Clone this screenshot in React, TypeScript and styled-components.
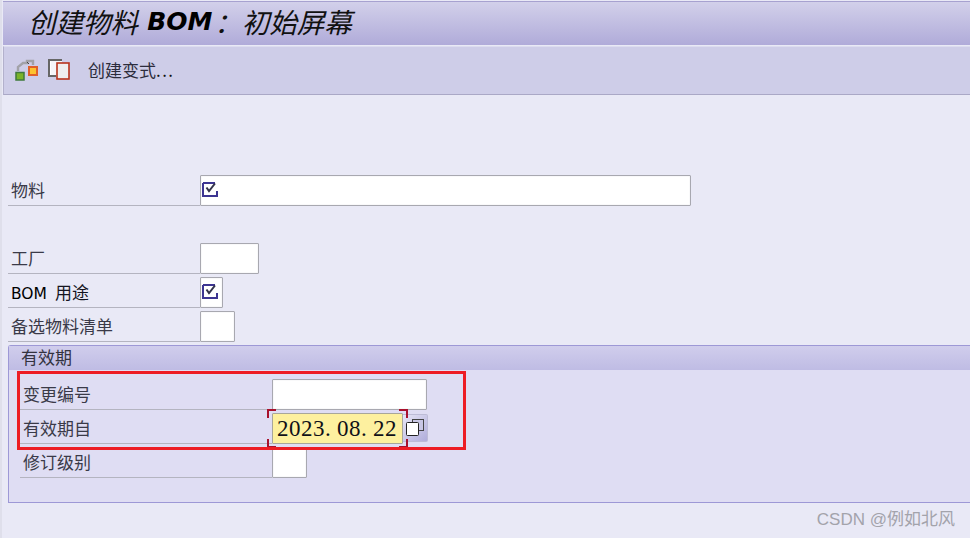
import styled, { createGlobalStyle } from "styled-components";

const CJK = `"Noto Sans CJK SC", "Liberation Sans", sans-serif`;

const GlobalStyle = createGlobalStyle`
  html, body {
    margin: 0;
    padding: 0;
    background: #e9e9f6;
  }
  body {
    font-family: ${CJK};
    overflow: hidden;
  }
`;

const Page = styled.div`
  position: relative;
  width: 970px;
  height: 538px;
  box-sizing: border-box;
  padding: 1px 0 0 3px;
  background: linear-gradient(to right, #dfdfeb 0, #dfdfeb 2px, #e9e9f6 2px);
  overflow: hidden;
`;

const TitleBar = styled.div`
  height: 44px;
  box-sizing: border-box;
  padding: 0 0 5px 25px;
  display: flex;
  align-items: center;
  background: linear-gradient(to bottom, #d2d0ea, #b0abd9);
  border-top: 1px solid #a7a2d0;
  font-size: 27.5px;
  font-style: italic;
  color: #111;
  white-space: pre;
`;

const TitleLatin = styled.span`
  margin: 0 2px 0 3px;
  font-family: "DejaVu Sans", "Liberation Sans", sans-serif;
  font-weight: 700;
  font-size: 25px;
  color: #000;
`;

const Toolbar = styled.div`
  height: 49px;
  margin-top: 1px;
  box-sizing: border-box;
  padding: 0 0 3px 11px;
  display: flex;
  align-items: center;
  background: #cecde8;
  border-top: 1px solid #dcdcef;
  border-left: 1px solid #b3b1cc;
  border-bottom: 1px solid #aaa8c6;
`;

const IconGroup = styled.div`
  display: flex;
  align-items: center;
  gap: 10px;
`;

const ToolbarText = styled.span`
  margin-left: 18px;
  font-size: 17px;
  color: #2c2c3c;
`;

const ToolbarDots = styled.span`
  letter-spacing: 1.4px;
  color: #111;
`;

const Form = styled.div`
  display: flex;
  flex-direction: column;
  padding: 80px 0 0 5px;
`;

const Row = styled.div<{ $gapAfter?: number; $labelWidth: number }>`
  display: flex;
  height: 31px;
  margin-bottom: ${(p) => p.$gapAfter ?? 3}px;
  --label-width: ${(p) => p.$labelWidth}px;
`;

const Label = styled.div<{ $dark?: boolean }>`
  width: var(--label-width);
  box-sizing: border-box;
  padding: 0 0 2px 3px;
  display: flex;
  align-items: center;
  font-size: 17px;
  color: ${(p) => (p.$dark ? "#15151f" : "#3a3a48")};
  border-bottom: 1px solid #b4b4c0;
`;

const LatinLabel = styled.span`
  font-family: "DejaVu Sans", "Liberation Sans", sans-serif;
  color: #000;
  font-size: 15.5px;
  margin-right: 8px;
`;

const Field = styled.div<{ $width: number }>`
  width: ${(p) => p.$width}px;
  box-sizing: border-box;
  padding: 6px 0 0 1px;
  background: #fff;
  border: 1px solid #a8a8b0;
  border-radius: 1px;
  box-shadow: inset 0 0 1px #c4c4cc;
`;

const Group = styled.div`
  height: 158px;
  box-sizing: border-box;
  background: #dfddf3;
  border: 1px solid #9d98d6;
  border-right: 0;
  border-radius: 3px 0 0 0;
`;

const GroupHeader = styled.div`
  height: 24px;
  box-sizing: border-box;
  padding: 0 0 3px 12px;
  display: flex;
  align-items: center;
  background: linear-gradient(to bottom, #d0cdec, #bfbce4);
  font-size: 17px;
  color: #33333f;
`;

const GroupBody = styled.div`
  display: flex;
  flex-direction: column;
  padding: 9px 0 0 11px;
`;

const DateWrap = styled.div`
  position: relative;
  display: flex;
`;

const DateField = styled.div`
  width: 131px;
  box-sizing: border-box;
  padding-left: 4px;
  display: flex;
  align-items: center;
  background: #fdf09f;
  border: 1px solid #a8a69a;
  border-radius: 1px;
  font-family: "Liberation Serif", "DejaVu Serif", serif;
  font-size: 23px;
  letter-spacing: 0.5px;
  color: #101018;
  white-space: nowrap;
`;

const DateDot = styled.span`
  display: inline-block;
  width: 12px;
`;

const Corner = styled.i<{ $side: "left" | "right"; $edge: "top" | "bottom" }>`
  position: absolute;
  width: 7px;
  height: 7px;
  ${(p) => p.$side}: -5px;
  ${(p) => p.$edge}: -4px;
  border-${(p) => p.$side}: 2px solid #a8112c;
  border-${(p) => p.$edge}: 2px solid #a8112c;
`;

const PickerButton = styled.div`
  width: 25px;
  height: 28px;
  margin-top: 1px;
  box-sizing: border-box;
  padding-bottom: 2px;
  display: flex;
  align-items: center;
  justify-content: center;
  background: linear-gradient(135deg, #e6e5f5, #b0addb);
  border: 1px solid #bdbcd6;
  border-left: 0;
  border-radius: 0 2px 2px 0;
`;

const Highlight = styled.div`
  position: absolute;
  left: 17px;
  top: 371px;
  width: 449px;
  height: 79px;
  box-sizing: border-box;
  border: 3px solid #ed1c24;
  pointer-events: none;
`;

const Watermark = styled.div`
  position: absolute;
  right: 15px;
  top: 510px;
  font-family: "Liberation Sans", ${CJK};
  font-size: 17px;
  line-height: 20px;
  color: #a3a3ab;
  white-space: nowrap;
`;

const RequiredMark = () => (
  <svg width="16" height="16" viewBox="0 0 16 16" style={{ display: "block" }}>
    <path d="M1 1H13M1 1V14H15V9" fill="none" stroke="#3d3592" strokeWidth="2" />
    <path d="M4.5 5.5L7 9L13 1.5" fill="none" stroke="#33334a" strokeWidth="2" />
  </svg>
);

const HierarchyIcon = () => (
  <svg width="23" height="23" viewBox="0 0 23 23" style={{ display: "block" }}>
    <path d="M3 13V9L8 5H12V3H18V7" fill="none" stroke="#a2a2a8" strokeWidth="2.4" />
    <path d="M12 4L14 6" fill="none" stroke="#444" strokeWidth="1" />
    <rect x="1" y="14.5" width="8" height="7.5" fill="#7ab32a" stroke="#3f7a3c" strokeWidth="1.5" />
    <rect x="14" y="9" width="8" height="8" fill="#fdc22f" stroke="#e0602a" strokeWidth="2" />
  </svg>
);

const CopyIcon = () => (
  <svg width="22" height="21" viewBox="0 0 22 21" style={{ display: "block" }}>
    <path d="M14 1H1V17H8" fill="#fff" stroke="#666" strokeWidth="2" />
    <rect x="3" y="2" width="11" height="14" fill="#f6f6fa" />
    <rect x="9" y="4" width="12" height="16" fill="#efefef" stroke="#b8341c" strokeWidth="1.6" />
  </svg>
);

const StackIcon = () => (
  <svg width="18" height="17" viewBox="0 0 18 17" style={{ display: "block" }}>
    <rect x="6.5" y="0.5" width="11" height="11" fill="#c8c6e4" stroke="#444" />
    <rect x="0.5" y="3.5" width="12" height="13" rx="1" fill="#fff" stroke="#222" />
  </svg>
);

export default function App() {
  return (
    <>
      <GlobalStyle />
      <Page>
        <TitleBar>
          创建物料 <TitleLatin>BOM</TitleLatin>：初始屏幕
        </TitleBar>
        <Toolbar>
          <IconGroup>
            <HierarchyIcon />
            <CopyIcon />
          </IconGroup>
          <ToolbarText>
            创建变式<ToolbarDots>...</ToolbarDots>
          </ToolbarText>
        </Toolbar>
        <Form>
          <Row $labelWidth={192} $gapAfter={37}>
            <Label>物料</Label>
            <Field $width={491}>
              <RequiredMark />
            </Field>
          </Row>
          <Row $labelWidth={192}>
            <Label>工厂</Label>
            <Field $width={59} />
          </Row>
          <Row $labelWidth={192}>
            <Label $dark>
              <span>
                <LatinLabel>BOM</LatinLabel>用途
              </span>
            </Label>
            <Field $width={23}>
              <RequiredMark />
            </Field>
          </Row>
          <Row $labelWidth={192}>
            <Label>备选物料清单</Label>
            <Field $width={35} />
          </Row>
          <Group>
            <GroupHeader>有效期</GroupHeader>
            <GroupBody>
              <Row $labelWidth={252}>
                <Label>变更编号</Label>
                <Field $width={155} />
              </Row>
              <Row $labelWidth={252}>
                <Label>有效期自</Label>
                <DateWrap>
                  <DateField>
                    2023<DateDot>.</DateDot>08<DateDot>.</DateDot>22
                  </DateField>
                  <Corner $side="left" $edge="top" />
                  <Corner $side="left" $edge="bottom" />
                  <Corner $side="right" $edge="top" />
                  <Corner $side="right" $edge="bottom" />
                </DateWrap>
                <PickerButton>
                  <StackIcon />
                </PickerButton>
              </Row>
              <Row $labelWidth={252}>
                <Label>修订级别</Label>
                <Field $width={35} />
              </Row>
            </GroupBody>
          </Group>
        </Form>
        <Highlight />
        <Watermark>CSDN @例如北风</Watermark>
      </Page>
    </>
  );
}
